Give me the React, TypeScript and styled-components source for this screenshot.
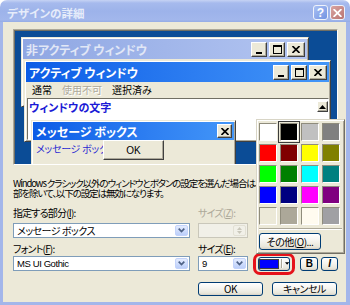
import React from "react";
import styled, { createGlobalStyle } from "styled-components";

const GlobalStyle = createGlobalStyle`
  html, body {
    margin: 0;
    padding: 0;
    background: #ffffff;
  }
  body {
    font-family: "Noto Sans CJK JP", "Liberation Sans", sans-serif;
  }
`;

const Window = styled.div`
  width: 350px;
  height: 305px;
  display: flex;
  flex-direction: column;
  font-family: "Noto Sans CJK JP", "Liberation Sans", sans-serif;
  font-feature-settings: "palt" 1;
  color: #000;
`;

const TitleBar = styled.div`
  height: 22px;
  flex: none;
  box-sizing: border-box;
  display: flex;
  align-items: center;
  padding: 3px 5px 0 7px;
  border-radius: 7px 7px 0 0;
  background: linear-gradient(180deg, #c6d3f4 0px, #a6baed 3px, #9db3ea 50%, #a2b7ec 90%, #94abe5 100%);
`;

const TitleText = styled.span`
  flex: 1;
  color: #e6ecfa;
  font-size: 11.5px;
  font-weight: 700;
  line-height: 12px;
`;

const CaptionButton = styled.span<{ $kind: "help" | "close" }>`
  width: 15px;
  height: 15px;
  box-sizing: border-box;
  margin-left: 2px;
  border: 1px solid #eef2fb;
  border-radius: 3px;
  display: flex;
  align-items: center;
  justify-content: center;
  color: #fff;
  font-family: "Liberation Sans", sans-serif;
  font-size: 12px;
  font-weight: 700;
  background: ${(p) =>
    p.$kind === "help"
      ? "linear-gradient(135deg, #a9c0f3, #7394e2)"
      : "linear-gradient(135deg, #d9a4a2, #b97471)"};
`;

const Frame = styled.div`
  flex: 1;
  display: flex;
  padding: 0 4px 3px 3px;
  background: #a3b6ea;
`;

const Body = styled.div`
  flex: 1;
  position: relative;
  display: flex;
  flex-direction: column;
  padding: 7px 8px 0 10px;
  background: #ece9d8;
`;

/* ---------- preview ---------- */

const Preview = styled.div`
  position: relative;
  width: 325px;
  height: 136px;
  box-sizing: border-box;
  flex: none;
  overflow: hidden;
  border: 1px solid;
  border-color: #aca899 #ffffff #ffffff #aca899;
  box-shadow: inset 1px 1px #716f64;
  background: #0b4c96;
`;

const PreviewWin = styled.div`
  position: absolute;
  box-sizing: border-box;
  display: flex;
  flex-direction: column;
  padding: 1px;
  background: #ece9d8;
  border: 1px solid;
  border-color: #ece9d8 #404040 #404040 #ece9d8;
  box-shadow: inset 1px 1px #ffffff, inset -1px -1px #aca899;
`;

const InactiveWin = styled(PreviewWin)`
  left: 7px;
  top: 7px;
  width: 288px;
  height: 70px;
`;

const ActiveWin = styled(PreviewWin)`
  left: 10px;
  top: 30px;
  width: 307px;
  height: 82px;
`;

const MessageWin = styled(PreviewWin)`
  left: 17px;
  top: 90px;
  width: 205px;
  height: 60px;
`;

const PreviewTitle = styled.div<{ $active?: boolean; $small?: boolean }>`
  height: ${(p) => (p.$small ? 18 : 20)}px;
  flex: none;
  display: flex;
  align-items: center;
  padding: 0 2px 0 3px;
  background: ${(p) =>
    p.$active
      ? "linear-gradient(90deg, #0b5ce6, #2f80f2 60%, #4396f8)"
      : "linear-gradient(90deg, #8fa7e3, #b3c5f1)"};
  color: ${(p) => (p.$active ? "#ffffff" : "#e1e7f6")};
  font-size: 12px;
  font-weight: 700;
  line-height: 13px;
  white-space: nowrap;
`;

const PreviewTitleText = styled.span`
  flex: 1;
`;

const ClassicButton = styled.span<{ $w?: number; $h?: number }>`
  width: ${(p) => p.$w ?? 16}px;
  height: ${(p) => p.$h ?? 15}px;
  box-sizing: border-box;
  margin-left: 2px;
  display: flex;
  align-items: center;
  justify-content: center;
  background: #ece9d8;
  border: 1px solid;
  border-color: #ffffff #404040 #404040 #ffffff;
  box-shadow: inset -1px -1px #aca899;
  font-size: 10px;
  line-height: 10px;
`;

const MenuRow = styled.div`
  height: 15px;
  flex: none;
  display: flex;
  align-items: center;
  gap: 10px;
  padding-left: 6px;
  font-size: 10px;
  line-height: 11px;
`;

const MenuItem = styled.span<{ $disabled?: boolean }>`
  color: ${(p) => (p.$disabled ? "#aca899" : "#000")};
  text-shadow: ${(p) => (p.$disabled ? "1px 1px #ffffff" : "none")};
`;

const ClientArea = styled.div`
  flex: 1;
  display: flex;
  margin: 1px 0 0 1px;
  background: #ffffff;
  border: 1px solid;
  border-color: #716f64 #ffffff #ffffff #716f64;
`;

const WindowText = styled.span`
  flex: 1;
  padding: 2px 0 0 1px;
  color: #1a1ad6;
  font-size: 11px;
  font-weight: 700;
  line-height: 12px;
`;

const ScrollBar = styled.div`
  width: 12px;
  padding: 2px 1px 0 0;
  display: flex;
  flex-direction: column;
`;

const MessageBody = styled.div`
  flex: 1;
  padding: 3px 0 0 3px;
  color: #2a2ad2;
  font-size: 10px;
  line-height: 12px;
  white-space: nowrap;
  letter-spacing: -0.3px;
`;

const MessageOk = styled.span`
  position: absolute;
  left: 71px;
  top: 19px;
  width: 61px;
  height: 20px;
  box-sizing: border-box;
  display: flex;
  align-items: center;
  justify-content: center;
  background: #ece9d8;
  border: 1px solid;
  border-color: #ffffff #404040 #404040 #ffffff;
  box-shadow: inset -1px -1px #aca899;
  font-family: "Liberation Sans", sans-serif;
  font-size: 10px;
`;

/* ---------- colour palette popup ---------- */

const Palette = styled.div`
  position: absolute;
  left: 253px;
  top: 97px;
  width: 89px;
  height: 135px;
  box-sizing: border-box;
  z-index: 2;
  padding: 3px 0 0 2px;
  background: #ece9d8;
  border: 1px solid;
  border-color: #d8d5c6 #716f64 #716f64 #d8d5c6;
  box-shadow: inset 1px 1px #ffffff, inset -1px -1px #aca899;
`;

const SwatchGrid = styled.div`
  display: grid;
  grid-template-columns: repeat(4, 18px);
  grid-auto-rows: 18px;
  gap: 3px;
`;

const Swatch = styled.span<{ $color: string; $selected?: boolean }>`
  box-sizing: border-box;
  background: ${(p) => p.$color};
  border: 1px solid;
  border-color: #8f8c7c #ffffff #ffffff #8f8c7c;
  outline: ${(p) => (p.$selected ? "1px solid #3c3c3c" : "none")};
  outline-offset: 1px;
`;

const PaletteRule = styled.div`
  margin: 3px 2px 3px 0;
  height: 0;
  border-top: 1px solid #aca899;
  border-bottom: 1px solid #ffffff;
`;

/* ---------- settings area ---------- */

const Description = styled.div`
  margin-top: 13px;
  font-size: 9.5px;
  line-height: 10px;
  white-space: nowrap;
  letter-spacing: -1.1px;
`;

const Row = styled.div<{ $gap?: number }>`
  display: flex;
  align-items: center;
  margin-top: ${(p) => p.$gap ?? 0}px;
`;

const Label = styled.span<{ $w?: number; $disabled?: boolean }>`
  width: ${(p) => (p.$w ? `${p.$w}px` : "auto")};
  font-size: 10px;
  line-height: 10px;
  letter-spacing: -0.8px;
  white-space: nowrap;
  color: ${(p) => (p.$disabled ? "#aca899" : "#000")};
`;

const Key = styled.span`
  text-decoration: underline;
`;

const Combo = styled.div<{ $w: number }>`
  width: ${(p) => p.$w}px;
  height: 15px;
  box-sizing: border-box;
  flex: none;
  display: flex;
  align-items: center;
  padding: 0 1px;
  background: #ffffff;
  border: 1px solid #7f9db9;
`;

const ComboText = styled.span<{ $latin?: boolean }>`
  flex: 1;
  padding-left: 2px;
  font-family: ${(p) =>
    p.$latin ? '"Liberation Sans", sans-serif' : '"Noto Sans CJK JP", sans-serif'};
  font-size: ${(p) => (p.$latin ? 9.5 : 10)}px;
  letter-spacing: ${(p) => (p.$latin ? -0.4 : -0.5)}px;
  line-height: 12px;
  white-space: nowrap;
`;

const ComboArrow = styled.span`
  width: 13px;
  height: 11px;
  box-sizing: border-box;
  display: flex;
  align-items: center;
  justify-content: center;
  border: 1px solid #c3d3fb;
  border-radius: 2px;
  background: linear-gradient(180deg, #e4ecfe, #bccffa);
`;

const Spin = styled.div`
  width: 50px;
  height: 15px;
  box-sizing: border-box;
  margin-left: 8px;
  display: flex;
  justify-content: flex-end;
  padding: 1px;
  background: #f1f0e8;
  border: 1px solid #c9c7ba;
`;

const SpinArrows = styled.span`
  width: 11px;
  display: flex;
  flex-direction: column;
  border: 1px solid #e2e0d4;
  border-radius: 2px;
`;

const SpinHalf = styled.span`
  flex: 1;
  display: flex;
  align-items: center;
  justify-content: center;
`;

const XpButton = styled.span<{ $w: number }>`
  width: ${(p) => p.$w}px;
  height: 14px;
  box-sizing: border-box;
  flex: none;
  display: flex;
  align-items: center;
  justify-content: center;
  border: 1px solid #003c74;
  border-radius: 3px;
  background: linear-gradient(180deg, #ffffff 0%, #f5f4ef 45%, #e8e6da 85%, #d6d0c5 100%);
  font-size: 10px;
  line-height: 10px;
  letter-spacing: -0.5px;
  white-space: nowrap;
`;

const Highlight = styled.span`
  display: flex;
  padding: 1px 2px;
  margin: -4px 0 -4px 5px;
  border: 3px solid #e5121a;
  border-radius: 7px;
`;

const ColorFill = styled.span`
  width: 21px;
  height: 8px;
  margin-right: 2px;
  background: #0000ff;
  border: 1px solid #404040;
`;

const ColorSplit = styled.span`
  width: 0;
  height: 9px;
  margin-right: 2px;
  border-left: 1px solid #aca899;
  border-right: 1px solid #ffffff;
`;

const FontStyleButton = styled(XpButton)<{ $bold?: boolean }>`
  margin-left: ${(p) => (p.$bold ? 5 : 3)}px;
  font-family: "Liberation Sans", sans-serif;
  font-weight: 700;
  font-style: ${(p) => (p.$bold ? "normal" : "italic")};
`;

const ButtonRow = styled.div`
  display: flex;
  gap: 9px;
  margin-top: 11px;
  padding-left: 185px;
`;

const MoreButton = styled(XpButton)`
  height: 17px;
`;

/* ---------- glyphs ---------- */

const MinGlyph = () => (
  <svg width="8" height="9" viewBox="0 0 8 9">
    <rect x="1" y="7" width="6" height="2" fill="#000" />
  </svg>
);

const MaxGlyph = () => (
  <svg width="9" height="9" viewBox="0 0 9 9">
    <rect x="0.5" y="0.5" width="8" height="8" fill="none" stroke="#000" />
    <rect x="0" y="0" width="9" height="2" fill="#000" />
  </svg>
);

const CloseGlyph = ({ color = "#000", size = 8 }: { color?: string; size?: number }) => (
  <svg width={size} height={size - 1} viewBox="0 0 8 7">
    <path d="M0.5 0 L7.5 7 M7.5 0 L0.5 7" stroke={color} strokeWidth="1.6" />
  </svg>
);

const UpGlyph = () => (
  <svg width="7" height="4" viewBox="0 0 7 4">
    <path d="M3.5 0 L7 4 L0 4 Z" fill="#000" />
  </svg>
);

const Chevron = () => (
  <svg width="7" height="5" viewBox="0 0 7 5">
    <path d="M0.7 0.7 L3.5 3.5 L6.3 0.7" stroke="#4d6185" strokeWidth="1.7" fill="none" />
  </svg>
);

const SmallTriangle = ({ up, color }: { up?: boolean; color: string }) => (
  <svg width="5" height="3" viewBox="0 0 5 3">
    <path d={up ? "M2.5 0 L5 3 L0 3 Z" : "M0 0 L5 0 L2.5 3 Z"} fill={color} />
  </svg>
);

const swatches = [
  "#ffffff", "#000000", "#c0c0c0", "#808080",
  "#ff0000", "#800000", "#ffff00", "#808000",
  "#00ff00", "#008000", "#00ffff", "#008080",
  "#0000ff", "#000080", "#ff00ff", "#800080",
  "#ece9d8", "#aca899", "#fffbf0", "#a0a0a4",
];

const WindowButtons = () => (
  <>
    <ClassicButton>
      <MinGlyph />
    </ClassicButton>
    <ClassicButton>
      <MaxGlyph />
    </ClassicButton>
    <ClassicButton $w={18}>
      <CloseGlyph />
    </ClassicButton>
  </>
);

export default function App() {
  return (
    <>
      <GlobalStyle />
      <Window>
        <TitleBar>
          <TitleText>デザインの詳細</TitleText>
          <CaptionButton $kind="help">?</CaptionButton>
          <CaptionButton $kind="close">
            <CloseGlyph color="#ffffff" size={9} />
          </CaptionButton>
        </TitleBar>
        <Frame>
          <Body>
            <Preview>
              <InactiveWin>
                <PreviewTitle>
                  <PreviewTitleText>非アクティブ ウィンドウ</PreviewTitleText>
                  <WindowButtons />
                </PreviewTitle>
              </InactiveWin>
              <ActiveWin>
                <PreviewTitle $active>
                  <PreviewTitleText>アクティブ ウィンドウ</PreviewTitleText>
                  <WindowButtons />
                </PreviewTitle>
                <MenuRow>
                  <MenuItem>通常</MenuItem>
                  <MenuItem $disabled>使用不可</MenuItem>
                  <MenuItem>選択済み</MenuItem>
                </MenuRow>
                <ClientArea>
                  <WindowText>ウィンドウの文字</WindowText>
                  <ScrollBar>
                    <ClassicButton $w={11} $h={11}>
                      <UpGlyph />
                    </ClassicButton>
                  </ScrollBar>
                </ClientArea>
              </ActiveWin>
              <MessageWin>
                <PreviewTitle $active $small>
                  <PreviewTitleText>メッセージ ボックス</PreviewTitleText>
                  <ClassicButton $w={15} $h={14}>
                    <CloseGlyph />
                  </ClassicButton>
                </PreviewTitle>
                <MessageBody>メッセージ ボックスの</MessageBody>
                <MessageOk>OK</MessageOk>
              </MessageWin>
            </Preview>

            <Description>
              Windows クラシック以外のウィンドウとボタンの設定を選んだ場合は、一
              <br />
              部を除いて、以下の設定は無効になります。
            </Description>

            <Row $gap={10}>
              <Label $w={185}>
                指定する部分(<Key>I</Key>):
              </Label>
              <Label $disabled>
                サイズ(<Key>Z</Key>):
              </Label>
            </Row>
            <Row $gap={5}>
              <Combo $w={177}>
                <ComboText>メッセージ ボックス</ComboText>
                <ComboArrow>
                  <Chevron />
                </ComboArrow>
              </Combo>
              <Spin>
                <SpinArrows>
                  <SpinHalf>
                    <SmallTriangle up color="#c9c7ba" />
                  </SpinHalf>
                  <SpinHalf>
                    <SmallTriangle color="#c9c7ba" />
                  </SpinHalf>
                </SpinArrows>
              </Spin>
            </Row>

            <Row $gap={6}>
              <Label $w={185}>
                フォント(<Key>F</Key>):
              </Label>
              <Label>
                サイズ(<Key>E</Key>):
              </Label>
            </Row>
            <Row $gap={2}>
              <Combo $w={177}>
                <ComboText $latin>MS UI Gothic</ComboText>
                <ComboArrow>
                  <Chevron />
                </ComboArrow>
              </Combo>
              <Combo $w={50} style={{ marginLeft: 8 }}>
                <ComboText $latin>9</ComboText>
                <ComboArrow>
                  <Chevron />
                </ComboArrow>
              </Combo>
              <Highlight>
                <XpButton $w={32}>
                  <ColorFill />
                  <ColorSplit />
                  <SmallTriangle color="#000" />
                </XpButton>
              </Highlight>
              <FontStyleButton $w={18} $bold>
                B
              </FontStyleButton>
              <FontStyleButton $w={17}>I</FontStyleButton>
            </Row>

            <ButtonRow>
              <XpButton $w={65}>OK</XpButton>
              <XpButton $w={65}>キャンセル</XpButton>
            </ButtonRow>

            <Palette>
              <SwatchGrid>
                {swatches.map((c, i) => (
                  <Swatch key={i} $color={c} $selected={i === 1} />
                ))}
              </SwatchGrid>
              <PaletteRule />
              <MoreButton $w={62}>
                その他(<Key>O</Key>)...
              </MoreButton>
            </Palette>
          </Body>
        </Frame>
      </Window>
    </>
  );
}
